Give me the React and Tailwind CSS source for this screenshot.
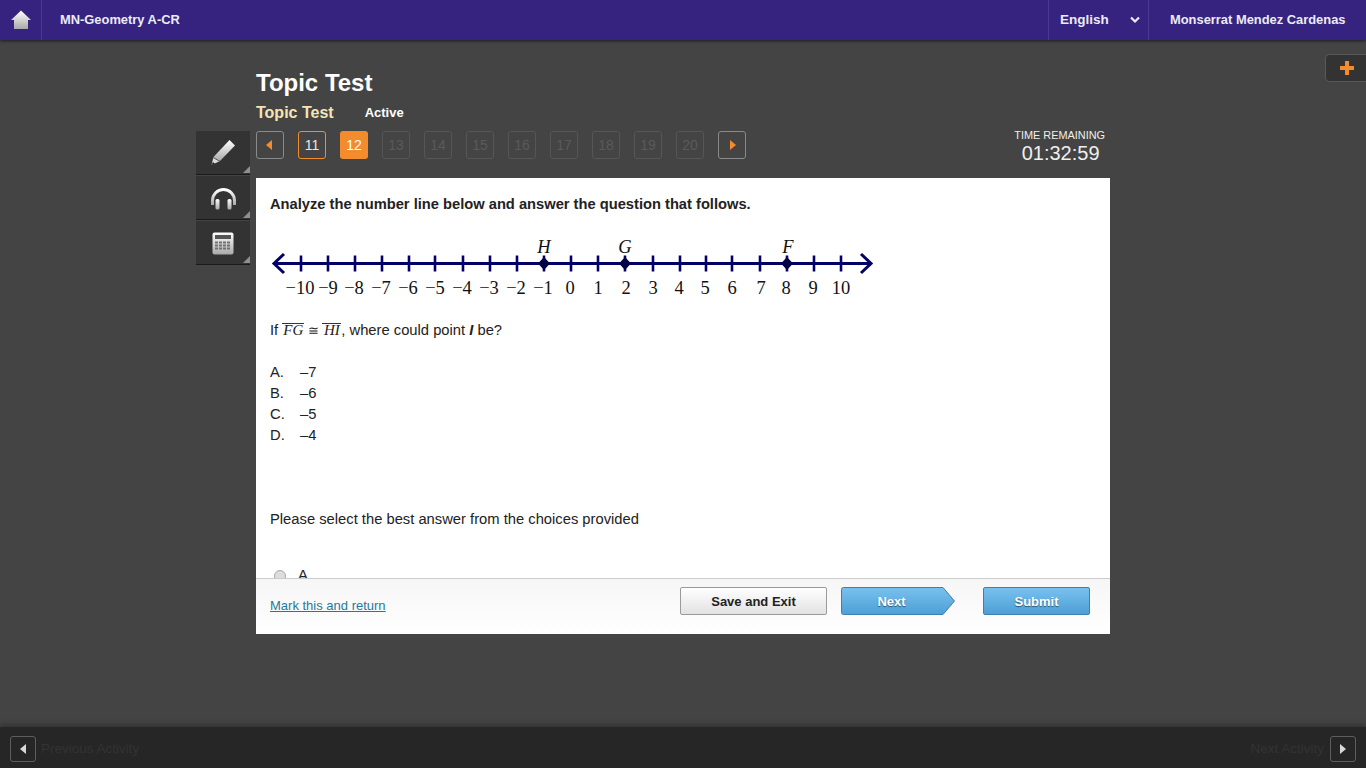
import React from 'react';

const ticks = [301, 328, 355, 382, 409, 435, 463, 490, 517, 544, 571, 598, 625, 653, 680, 706, 732, 760, 787, 814, 841];
const labels = [
  ['−10', 300], ['−9', 328], ['−8', 354], ['−7', 381], ['−6', 408], ['−5', 435], ['−4', 462], ['−3', 489], ['−2', 516], ['−1', 543],
  ['0', 570], ['1', 598], ['2', 626], ['3', 653], ['4', 679], ['5', 705], ['6', 732], ['7', 761], ['8', 786], ['9', 813], ['10', 841],
];
const points = [['H', 544, 544], ['G', 625, 625], ['F', 788, 787]];
const pages = [12, 13, 14, 15, 16, 17, 18, 19, 20];
const choices = [['A.', '–7'], ['B.', '–6'], ['C.', '–5'], ['D.', '–4']];

const Corner = () => (
  <span className="absolute right-0 bottom-[1px] w-0 h-0 border-l-[7px] border-l-transparent border-b-[7px] border-b-[#8f8f8f]" />
);

const Grad = ({ id }) => (
  <linearGradient id={id} x1="0" y1="0" x2="0" y2="1">
    <stop offset="0" stopColor="#ffffff" />
    <stop offset="1" stopColor="#a9a9a9" />
  </linearGradient>
);

const NumberLine = () => (
  <svg width="610" height="70" viewBox="266 235 610 70" className="block">
    <line x1="274" y1="263.5" x2="871" y2="263.5" stroke="#000066" strokeWidth="3" />
    <path d="M284 254 L274 263.5 L284 273" fill="none" stroke="#000066" strokeWidth="3" />
    <path d="M861 254 L871 263.5 L861 273" fill="none" stroke="#000066" strokeWidth="3" />
    {ticks.map((x) => (
      <line key={x} x1={x} y1="255.5" x2={x} y2="271.5" stroke="#000066" strokeWidth="2.6" />
    ))}
    {points.map(([name, labelX, x]) => (
      <g key={name}>
        <path d={`M${x} 257 L${x + 6} 263.5 L${x} 270 L${x - 6} 263.5 Z`} fill="#000044" />
        <text x={labelX} y="253" textAnchor="middle" fontFamily="Liberation Serif" fontStyle="italic" fontSize="18.5" fill="#111">{name}</text>
      </g>
    ))}
    {labels.map(([text, x]) => (
      <text key={text} x={x} y="294" textAnchor="middle" fontFamily="Liberation Serif" fontSize="18.5" fill="#111">{text}</text>
    ))}
  </svg>
);

const App = () => {
  return (
    <div className="relative h-screen w-full overflow-hidden flex flex-col bg-[#444444] font-['Liberation_Sans',sans-serif]">
      {/* Top bar */}
      <header className="h-10 shrink-0 flex items-stretch bg-[#35237f] text-[#ecebf7] font-bold shadow-[0_1px_3px_rgba(0,0,0,0.6)]">
        <div className="w-[42px] flex items-center justify-center border-r border-[#483a90]">
          <svg width="20" height="20" viewBox="0 0 20 20">
            <defs><Grad id="home" /></defs>
            <path d="M10 0.5 L20 10 L17 10 L17 19 L3 19 L3 10 L0 10 Z" fill="url(#home)" />
          </svg>
        </div>
        <div className="flex-1 pl-[18px] flex items-center text-[12.9px]">MN-Geometry A-CR</div>
        <div className="w-[101px] pl-[11px] pr-[8px] flex items-center justify-between border-l border-r border-[#483a90] text-[13.5px]">
          <span>English</span>
          <svg width="10" height="8" viewBox="0 0 10 8">
            <path d="M1 1.5 L5 5.5 L9 1.5" fill="none" stroke="#ecebf7" strokeWidth="2.2" />
          </svg>
        </div>
        <div className="w-[217px] pl-[21px] flex items-center text-[12.9px]">Monserrat Mendez Cardenas</div>
      </header>

      {/* Expand panel tab */}
      <div className="absolute right-0 top-[54px] w-[41px] h-[28px] flex items-center justify-center pl-[1px] bg-[#333333] border border-r-0 border-[#585858] rounded-l-[5px]">
        <svg width="14" height="14" viewBox="0 0 14 14">
          <path d="M5 0 H9 V5 H14 V9 H9 V14 H5 V9 H0 V5 H5 Z" fill="#f28c2c" />
        </svg>
      </div>

      <main className="flex-1 flex pl-[196px] min-h-0">
        {/* Tools */}
        <div className="w-[54px] mr-[6px] mt-[91px] flex flex-col gap-[1px]">
          <div className="relative h-[44px] bg-[#333333] border-b border-[#1a1a1a] flex items-center justify-center">
            <svg width="26" height="27" viewBox="0 0 26 27">
              <defs><Grad id="pen" /></defs>
              <path d="M19.5 1 L25 6.5 L10 22 L3.5 18 Z" fill="url(#pen)" />
              <path d="M3.5 18 L10 22 L1.5 26 Z" fill="#dddddd" />
              <path d="M3.2 18.5 L10 22.5" stroke="#555" strokeWidth="1" />
              <path d="M1.5 26 L3 23 L5 25 Z" fill="#222" />
            </svg>
            <Corner />
          </div>
          <div className="relative h-[44px] pt-[2px] bg-[#333333] border-b border-[#1a1a1a] flex items-center justify-center">
            <svg width="27" height="22" viewBox="0 0 27 22">
              <defs><Grad id="phones" /></defs>
              <path d="M2.5 17 V12.5 A11 11 0 0 1 24.5 12.5 V17" fill="none" stroke="url(#phones)" strokeWidth="3" />
              <rect x="5.5" y="11" width="4" height="10.5" rx="1.5" fill="url(#phones)" />
              <rect x="17.5" y="11" width="4" height="10.5" rx="1.5" fill="url(#phones)" />
            </svg>
            <Corner />
          </div>
          <div className="relative h-[44px] pt-[2px] bg-[#333333] border-b border-[#1a1a1a] flex items-center justify-center">
            <svg width="22" height="23" viewBox="0 0 22 23">
              <defs><Grad id="calc" /></defs>
              <rect x="0.5" y="0.5" width="21" height="22" rx="2" fill="url(#calc)" />
              <rect x="3" y="3" width="16" height="4" fill="#555" />
              {[9.5, 12.5, 15.5].map((y) =>
                [3, 7, 11, 15].map((x) => <rect key={`${x}-${y}`} x={x} y={y} width="3" height="2" fill="#707070" />)
              )}
            </svg>
            <Corner />
          </div>
        </div>

        {/* Test column */}
        <div className="w-[854px] flex flex-col">
          <h1 className="mt-[28px] text-[24px] leading-[30px] font-bold text-white">Topic Test</h1>
          <div className="mt-[5px] h-[20px] flex items-center">
            <span className="text-[16px] font-bold text-[#f4e6b4]">Topic Test</span>
            <span className="ml-[31px] text-[13px] font-bold text-white">Active</span>
          </div>

          <div className="mt-[8px] h-[47px] flex items-start justify-between">
            <div className="flex gap-[14px] text-[14px]">
              <button className="w-[28px] h-[28px] flex items-center justify-center pr-[3px] rounded-[3px] border border-[#8a8a8a]">
                <span className="w-0 h-0 border-y-[5px] border-y-transparent border-r-[6px] border-r-[#f28c2c]" />
              </button>
              <button className="w-[28px] h-[28px] rounded-[3px] border border-[#f28c2c] text-[#e8e8e8]">11</button>
              {pages.map((n) => (
                <button
                  key={n}
                  className={n === 12
                    ? 'w-[28px] h-[28px] rounded-[3px] bg-[#f28c2c] text-white'
                    : 'w-[28px] h-[28px] rounded-[3px] border border-[#565656] text-[#5a5a5a]'}
                >
                  {n}
                </button>
              ))}
              <button className="w-[28px] h-[28px] flex items-center justify-center pl-[1px] rounded-[3px] border border-[#8a8a8a]">
                <span className="w-0 h-0 border-y-[5px] border-y-transparent border-l-[6px] border-l-[#f28c2c]" />
              </button>
            </div>
            <div className="mr-[5px] -mt-[2px] flex flex-col items-center text-[#efefef]">
              <span className="text-[10.9px] leading-[13px]">TIME REMAINING</span>
              <span className="pl-[2px] text-[20px] leading-[22px]">01:32:59</span>
            </div>
          </div>

          {/* Question card */}
          <div className="h-[456px] bg-white flex flex-col text-[#222222]">
            <div className="h-[400px] overflow-hidden px-[14px] text-[14.75px]">
              <p className="mt-[17px] leading-[18px] font-bold text-[14.7px]">Analyze the number line below and answer the question that follows.</p>
              <div className="mt-[22px] -ml-[4px]">
                <NumberLine />
              </div>
              <p className="mt-[15px] leading-[21px]">
                If{' '}
                <span className="inline-block w-[22px] text-center border-t border-[#333] leading-[13px] font-['Liberation_Serif',serif] italic text-[15px]">FG</span>
                <span className="inline-block w-[18px] text-center font-['Liberation_Serif',serif] text-[13px]">≅</span>
                <span className="inline-block w-[19px] text-center border-t border-[#333] leading-[13px] font-['Liberation_Serif',serif] italic text-[15px]">HI</span>
                , where could point <b><i>I</i></b> be?
              </p>
              <ul className="mt-[21px] leading-[21px]">
                {choices.map(([letter, value]) => (
                  <li key={letter} className="flex">
                    <span className="w-[30px]">{letter}</span>
                    <span>{value}</span>
                  </li>
                ))}
              </ul>
              <p className="mt-[63px] leading-[21px]">Please select the best answer from the choices provided</p>
              <div className="mt-[35px] flex items-center leading-[21px]">
                <span className="ml-[4px] w-[12px] h-[12px] rounded-full border border-[#aaaaaa] bg-[#dddddd]" />
                <span className="ml-[12px]">A</span>
              </div>
            </div>

            <div className="h-[56px] border-t border-[#cccccc] bg-gradient-to-b from-[#f6f6f6] to-white flex items-start pl-[14px] pt-[8px]">
              <a className="w-[116px] mt-[11px] text-[13px] leading-[16px] text-[#1d7a9c] underline whitespace-nowrap">Mark this and return</a>
              <button className="ml-[294px] w-[147px] h-[28px] pt-[1px] rounded-[2px] border border-[#9a9a9a] bg-gradient-to-b from-white to-[#e2e2e2] text-[13px] font-bold text-[#222222]">
                Save and Exit
              </button>
              <button className="relative ml-[14px] w-[114px] h-[28px] pt-[1px] text-[13px] font-bold text-white [text-shadow:0_1px_1px_rgba(0,0,0,0.5)]">
                <svg className="absolute left-0 top-0" width="114" height="28" viewBox="0 0 114 28">
                  <defs>
                    <linearGradient id="next" x1="0" y1="0" x2="0" y2="1">
                      <stop offset="0" stopColor="#78c1ee" />
                      <stop offset="1" stopColor="#4d9fd6" />
                    </linearGradient>
                  </defs>
                  <path d="M2.5 0.5 H102 L113.5 14 L102 27.5 H2.5 Q0.5 27.5 0.5 25.5 V2.5 Q0.5 0.5 2.5 0.5 Z" fill="url(#next)" stroke="#3d7fae" />
                </svg>
                <span className="relative block pr-[13px]">Next</span>
              </button>
              <button className="ml-[28px] w-[107px] h-[28px] pt-[1px] rounded-[2px] border border-[#3d7fae] bg-gradient-to-b from-[#78c1ee] to-[#4d9fd6] text-[13px] font-bold text-white [text-shadow:0_1px_1px_rgba(0,0,0,0.5)]">
                Submit
              </button>
            </div>
          </div>
        </div>
      </main>

      {/* Bottom bar */}
      <footer className="h-[41px] shrink-0 flex items-center justify-between px-[10px] pt-[3px] bg-[#262626] shadow-[0_-3px_5px_rgba(0,0,0,0.25)] text-[13.5px] text-[#333333]">
        <div className="flex items-center gap-[5px]">
          <button className="w-[26px] h-[26px] flex items-center justify-center rounded-[3px] border border-[#5e5e5e]">
            <span className="w-0 h-0 border-y-[5px] border-y-transparent border-r-[6px] border-r-[#d8d8d8]" />
          </button>
          <span>Previous Activity</span>
        </div>
        <div className="flex items-center gap-[6px]">
          <span>Next Activity</span>
          <button className="w-[26px] h-[26px] flex items-center justify-center rounded-[3px] border border-[#5e5e5e]">
            <span className="w-0 h-0 border-y-[5px] border-y-transparent border-l-[6px] border-l-[#d8d8d8]" />
          </button>
        </div>
      </footer>
    </div>
  );
};

export default App;
